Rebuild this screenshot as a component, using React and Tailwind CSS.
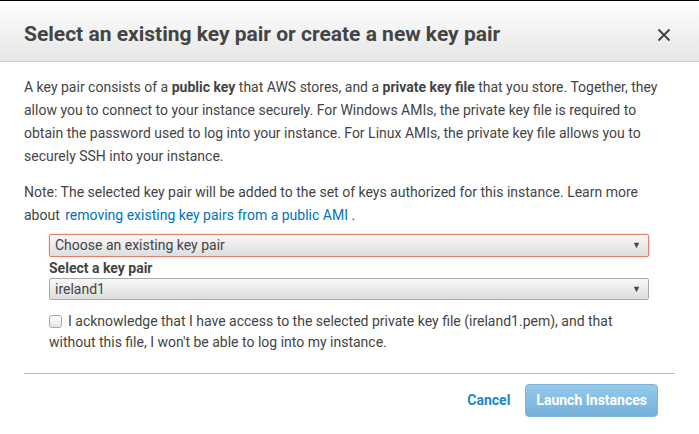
export default function App() {
  return (
    <div className="w-[699px] h-[434px] bg-white overflow-hidden text-[#444] border-t border-black" style={{ fontFamily: 'Roboto, "Liberation Sans", sans-serif' }}>
      <div className="h-[61px] pt-[7px] flex items-center justify-between pl-6 pr-7 bg-gradient-to-b from-white to-[#e6e6e6] border-b border-[#cfcfcf]">
        <h1 className="text-[21px] font-bold text-[#444]">Select an existing key pair or create a new key pair</h1>
        <button className="text-[#444]">
          <svg width="14" height="14" viewBox="0 0 14 14" fill="none" stroke="currentColor" strokeWidth="2">
            <path d="M1.5 1.5L12.5 12.5M12.5 1.5L1.5 12.5" />
          </svg>
        </button>
      </div>

      <div className="pl-6 pr-3 pt-[14px] text-[14px] leading-[23px]">
        <p>
          A key pair consists of a <b>public key</b> that AWS stores, and a <b>private key file</b> that you store. Together, they<br />
          allow you to connect to your instance securely. For Windows AMIs, the private key file is required to<br />
          obtain the password used to log into your instance. For Linux AMIs, the private key file allows you to<br />
          securely SSH into your instance.
        </p>
        <p className="mt-[13px]">
          Note: The selected key pair will be added to the set of keys authorized for this instance. Learn more<br />
          about <a className="text-[#0073bb] ml-[2px]">removing existing key pairs from a public AMI</a> .
        </p>

        <div className="ml-[25px] w-[600px] mt-[7px]">
          <div className="h-[23px] flex items-center justify-between pl-[5px] pr-[7px] border border-[#e0806c] rounded-[2px] bg-gradient-to-b from-[#f8f8f8] to-[#dedede] shadow-[0_0_2px_rgba(224,128,108,0.6)]">
            <span className="text-[14px] text-[#444]">Choose an existing key pair</span>
            <span className="text-[9px] text-[#444]">▼</span>
          </div>
          <div className="mt-[2px] font-bold text-[14px] leading-[18px] text-[#444]">Select a key pair</div>
          <div className="mt-[1px] h-[22px] flex items-center justify-between pl-[5px] pr-[7px] border border-[#a9a9a9] rounded-[2px] bg-gradient-to-b from-[#f8f8f8] to-[#dedede]">
            <span className="text-[14px] text-[#444]">ireland1</span>
            <span className="text-[9px] text-[#444]">▼</span>
          </div>
          <div className="mt-[11px] text-[14px] leading-[21px]">
            <span className="inline-block w-[13px] h-[13px] border border-[#a9a9a9] rounded-[3px] bg-gradient-to-b from-white to-[#e4e4e4] align-[-2px] mr-[6px]"></span>
            I acknowledge that I have access to the selected private key file (ireland1.pem), and that<br />
            without this file, I won't be able to log into my instance.
          </div>
        </div>
      </div>

      <div className="mx-6 mt-[20px] border-t border-[#bdbdbd]"></div>

      <div className="flex justify-end items-center pr-[41px] pt-[10px] gap-[15px]">
        <a className="text-[#1a86d6] font-bold text-[14px]">Cancel</a>
        <button className="h-[33px] px-[10px] rounded-[4px] border border-[#7fb3d8] bg-gradient-to-b from-[#95caec] to-[#74afd9] text-white font-bold text-[14px]">Launch Instances</button>
      </div>
    </div>
  );
}
